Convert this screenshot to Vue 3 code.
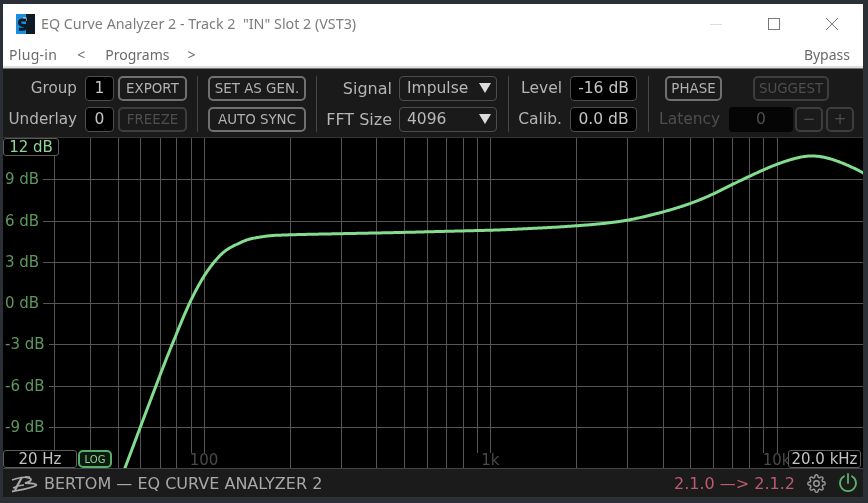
<script setup>
const titleText = 'EQ Curve Analyzer 2 - Track 2  "IN" Slot 2 (VST3)'

const freqs = [30, 40, 50, 60, 70, 80, 90, 100, 200, 300, 400, 500, 600, 700, 800, 900, 1000, 2000, 3000, 4000, 5000, 6000, 7000, 8000, 9000, 10000]
const xOf = (f) => 204 + 286.3 * Math.log10(f / 100)
const vLines = freqs.map((f) => Math.round(xOf(f)) + 0.5)

const dbs = [9, 6, 3, 0, -3, -6, -9]
const yOf = (db) => 303 - db * 13.75
const hLines = dbs.map((d) => Math.round(yOf(d)) + 0.5)
const dbLabels = dbs.map((d) => ({ text: d + " dB", top: yOf(d) - 138 }))
const freqLabels = [
  { text: "100", left: xOf(100) - 3 },
  { text: "1k", left: xOf(1000) - 3 },
  { text: "10k", left: xOf(10000) - 3 },
]

const pts = [
  [100, 532], [125, 468], [143, 420], [165, 362], [187, 308], [200, 282], [212, 264], [225, 250], [248, 239],
  [270, 235.5], [300, 234.5], [400, 232.5], [500, 230], [560, 227], [600, 224],
  [628, 220.5], [660, 213], [690, 204], [714, 194], [733, 184], [750, 176],
  [775, 164.5], [800, 156.5], [812, 154.5], [830, 158], [848, 165], [866, 174], [900, 195],
]
// sample the points every pixel and smooth them, wider on the flat right side
const xs = []
let ys = []
for (let x = 100; x <= 900; x++) {
  let i = 0
  while (pts[i + 1][0] < x) i++
  const t = (x - pts[i][0]) / (pts[i + 1][0] - pts[i][0])
  xs.push(x)
  ys.push(pts[i][1] + t * (pts[i + 1][1] - pts[i][1]))
}
for (let pass = 0; pass < 3; pass++) {
  ys = ys.map((_, i) => {
    const hw = xs[i] > 420 ? 9 : 4
    const part = ys.slice(Math.max(0, i - hw), i + hw + 1)
    return part.reduce((a, b) => a + b, 0) / part.length
  })
}
const curve = "M" + xs.map((x, i) => `${x} ${ys[i].toFixed(2)}`).join("L")
</script>

<template>
  <div class="app">
    <div class="window">
      <div class="titlebar">
        <svg class="s-logo" width="19" height="20" viewBox="0 0 19 20">
          <rect width="19" height="20" fill="#1b8fdc" />
          <rect x="10" width="9" height="20" fill="#0b1a26" />
          <path d="M7 3.500H10.500V7H8Z" fill="#f2f6f8" />
          <path d="M10 6H6.500Q3.500 6 3.500 8.500T7 11.500H9Q11 12 9.500 14T3 15" fill="none" stroke="#0b1a26" stroke-width="3" />
        </svg>
        <span class="title">{{ titleText }}</span>
        <div class="win-btns">
          <svg width="14" height="14" viewBox="0 0 14 14"><path d="M1 7.500H13" stroke="#ddd" /></svg>
          <svg width="14" height="14" viewBox="0 0 14 14"><rect x="1.500" y="1.500" width="11" height="11" fill="none" stroke="#777" /></svg>
          <svg width="14" height="14" viewBox="0 0 14 14"><path d="M1 1L13 13M13 1L1 13" stroke="#777" fill="none" /></svg>
        </div>
      </div>
      <div class="menubar">
        <span class="m-plugin">Plug-in</span>
        <span class="m-arrow">&lt;</span>
        <span class="m-programs">Programs</span>
        <span class="m-arrow last">&gt;</span>
        <span class="m-bypass">Bypass</span>
      </div>
    </div>

    <div class="toolbar">
      <div class="group g1">
        <span class="lbl">Group</span>
        <span class="box">1</span>
        <button class="btn">EXPORT</button>
        <span class="lbl">Underlay</span>
        <span class="box">0</span>
        <button class="btn off">FREEZE</button>
      </div>
      <div class="sep"></div>
      <div class="group g2">
        <button class="btn">SET AS GEN.</button>
        <button class="btn">AUTO SYNC</button>
      </div>
      <div class="sep"></div>
      <div class="group g3">
        <span class="lbl">Signal</span>
        <div class="select">Impulse<i class="tri"></i></div>
        <span class="lbl">FFT Size</span>
        <div class="select">4096<i class="tri"></i></div>
      </div>
      <div class="sep wide"></div>
      <div class="group g4">
        <span class="lbl">Level</span>
        <span class="box">-16 dB</span>
        <span class="lbl">Calib.</span>
        <span class="box">0.0 dB</span>
      </div>
      <div class="sep wide"></div>
      <div class="g5">
        <div class="row top">
          <button class="btn phase">PHASE</button>
          <button class="btn off suggest">SUGGEST</button>
        </div>
        <div class="row">
          <span class="lat-lbl">Latency</span>
          <span class="lat-box">0</span>
          <button class="btn off step minus">−</button>
          <button class="btn off step">+</button>
        </div>
      </div>
    </div>

    <div class="graph">
      <svg class="plot" width="860" height="330" viewBox="3 138 860 330">
        <path v-for="x in vLines" :key="x" :d="`M${x} 138V468`" stroke="#555" />
        <path v-for="y in hLines" :key="y" :d="`M3 ${y}H863`" stroke="#555" />
        <path :d="curve" fill="none" stroke="#84dc8e" stroke-width="3" />
      </svg>
      <span v-for="l in dbLabels" :key="l.text" class="db" :style="{ top: l.top + 'px' }">{{ l.text }}</span>
      <span v-for="l in freqLabels" :key="l.text" class="freq" :style="{ left: l.left + 'px' }">{{ l.text }}</span>
      <span class="badge top-db">12 dB</span>
      <span class="badge low">20 Hz</span>
      <span class="log">LOG</span>
      <span class="badge high">20.0 kHz</span>
    </div>

    <div class="footer">
      <svg class="b-logo" width="34" height="26" viewBox="0 2 34 26">
        <path d="M7 12C12 10 19 9 25 9" fill="none" stroke="#a8a8a8" stroke-width="1.600" />
        <path d="M17 9L10 22" fill="none" stroke="#a8a8a8" stroke-width="2.200" />
        <path d="M20 9C26 10 30 12 20 15C26 15 33 16 31 17.500C26 20.500 15 22 7 23.500" fill="none" stroke="#a8a8a8" stroke-width="1.800" />
        <path d="M8 20C12 18 15 17 19 17" fill="none" stroke="#a8a8a8" stroke-width="1.400" />
      </svg>
      <span class="brand">BERTOM — EQ CURVE ANALYZER 2</span>
      <span class="version">2.1.0 —&gt; 2.1.2</span>
      <svg class="gear" width="19" height="19" viewBox="0 0 24 24" fill="none" stroke="#9a9a9a" stroke-width="1.800" stroke-linejoin="round">
        <circle cx="12" cy="12" r="3.500" />
        <path d="M19.400 15a1.650 1.650 0 0 0 .33 1.820l.06.06a2 2 0 1 1-2.830 2.830l-.06-.06a1.650 1.650 0 0 0-2.800 1.170V21a2 2 0 1 1-4 0v-.09a1.650 1.650 0 0 0-2.800-1.170l-.06.06a2 2 0 1 1-2.830-2.830l.06-.06a1.650 1.650 0 0 0-1.170-2.800H3a2 2 0 1 1 0-4h.09a1.650 1.650 0 0 0 1.170-2.800l-.06-.06a2 2 0 1 1 2.830-2.830l.06.06a1.650 1.650 0 0 0 2.800-1.170V3a2 2 0 1 1 4 0v.09a1.650 1.650 0 0 0 2.800 1.170l.06-.06a2 2 0 1 1 2.830 2.830l-.06.06a1.650 1.650 0 0 0 1.170 2.800H21a2 2 0 1 1 0 4h-.09a1.650 1.650 0 0 0-1.510 1z" />
      </svg>
      <svg class="power" width="20" height="20" viewBox="0 0 20 20" fill="none" stroke="#58b268" stroke-width="1.800" stroke-linecap="round">
        <path d="M6 3.200A8 8 0 1 0 14 3.200" />
        <path d="M10 1V10" />
      </svg>
    </div>
  </div>
</template>

<style>
html,
body {
  margin: 0;
  background: #2b3037;
}
</style>

<style scoped>
.app {
  width: 868px;
  height: 503px;
  box-sizing: border-box;
  padding: 4px 5px 0 3px;
  background: #2b3037;
  overflow: hidden;
  font-family: "DejaVu Sans", sans-serif;
  filter: blur(0.3px);
}

/* host window */
.window {
  height: 64px;
  background: #fff;
  border-bottom: 1px solid #777;
  box-sizing: content-box;
  font-family: "Noto Sans", sans-serif;
  box-shadow: inset 0 -2px 1px #ddd;
}
.titlebar {
  display: flex;
  align-items: center;
  height: 39px;
  padding-left: 13px;
}
.s-logo {
  margin-right: 6px;
}
.title {
  font-size: 14.300px;
  color: #7d7d7d;
  white-space: pre;
}
.win-btns {
  margin-left: auto;
  display: flex;
  gap: 44px;
  margin-right: 24px;
}
.menubar {
  display: flex;
  align-items: center;
  height: 22px;
  padding-left: 6px;
  padding-right: 13px;
  font-size: 14px;
  color: #6b6b6b;
}
.m-plugin {
  letter-spacing: 0.3px;
}
.m-arrow {
  margin-left: 20px;
}
.m-arrow.last {
  margin-left: 18px;
}
.m-programs {
  margin-left: 20px;
}
.m-bypass {
  margin-left: auto;
}

/* controls */
.toolbar {
  display: flex;
  align-items: center;
  height: 68px;
  background: #1a1a1a;
  border-bottom: 1px solid #333;
  box-sizing: content-box;
}
.group {
  display: grid;
  grid-template-rows: 25px 25px;
  row-gap: 6px;
  align-items: stretch;
  margin-top: 1px;
}
.g1 {
  grid-template-columns: 78px 29px 69px;
  column-gap: 4px;
}
.g1 .lbl {
  padding-right: 4px;
  font-size: 15.200px;
}
.g2 {
  grid-template-columns: 98px;
}
.g3 {
  grid-template-columns: 65px 98px;
  column-gap: 7px;
}
.g3 .lbl {
  font-size: 16px;
}
.g4 {
  grid-template-columns: 43px 67px;
  column-gap: 8px;
}
.sep {
  width: 1px;
  height: 56px;
  background: #474747;
  margin: 1px 10px 0;
}
.sep.wide {
  margin-left: 11px;
}
.lbl {
  display: flex;
  align-items: center;
  justify-content: flex-end;
  font-size: 15.500px;
  color: #b4b4b4;
  white-space: nowrap;
}
.box {
  display: flex;
  align-items: center;
  justify-content: center;
  background: #000;
  border: 1px solid #4d4d4d;
  border-radius: 4px;
  box-sizing: border-box;
  font-size: 15.500px;
  color: #c4c4c4;
}
.btn {
  display: flex;
  align-items: center;
  justify-content: center;
  padding: 0;
  background: #1a1a1a;
  border: 2px solid #707070;
  border-radius: 5px;
  box-sizing: border-box;
  font-family: "DejaVu Sans", sans-serif;
  font-size: 13.400px;
  color: #b0b0b0;
}
.btn.off {
  border-color: #3d3d3d;
  color: #4e4e4e;
}
.select {
  display: flex;
  align-items: center;
  justify-content: space-between;
  padding: 0 5px 0 7px;
  border: 1px solid #4d4d4d;
  border-radius: 4px;
  box-sizing: border-box;
  background: #1a1a1a;
  font-size: 15.500px;
  color: #b8b8b8;
}
.tri {
  width: 0;
  height: 0;
  border-left: 6.500px solid transparent;
  border-right: 6.500px solid transparent;
  border-top: 10px solid #dcdcdc;
}
.g5 {
  display: flex;
  flex-direction: column;
  gap: 6px;
  margin-top: 1px;
}
.row {
  display: flex;
  height: 25px;
}
.top {
  padding-left: 6px;
}
.phase {
  width: 57px;
}
.suggest {
  width: 76px;
  margin-left: 31px;
}
.lat-lbl {
  display: flex;
  align-items: center;
  width: 70px;
  font-size: 15.500px;
  color: #4e4e4e;
}
.lat-box {
  display: flex;
  align-items: center;
  justify-content: center;
  width: 64px;
  background: #050505;
  border-radius: 4px;
  font-size: 15.500px;
  color: #4e4e4e;
}
.step {
  width: 28px;
  margin-left: 2px;
  font-size: 15px;
}
.minus + .step {
  margin-left: 3px;
}

/* graph */
.graph {
  position: relative;
  width: 860px;
  height: 330px;
  background: #000;
  overflow: hidden;
}
.plot {
  display: block;
}
.db {
  position: absolute;
  left: 0;
  transform: translateY(-50%);
  padding: 0 4px 0 2px;
  background: #000;
  font-size: 15px;
  line-height: 18px;
  color: #5e985e;
}
.freq {
  position: absolute;
  bottom: 0;
  width: 30px;
  margin-left: -15px;
  background: #000;
  text-align: center;
  font-size: 15px;
  line-height: 15px;
  color: #4a4a4a;
}
.badge {
  position: absolute;
  display: flex;
  align-items: center;
  justify-content: center;
  height: 18px;
  box-sizing: border-box;
  background: #000;
  border: 1px solid #5c5c5c;
  border-radius: 3px;
  font-size: 15px;
  color: #c4c4c4;
}
.top-db {
  left: 0;
  top: 0;
  width: 56px;
  color: #8fd596;
}
.low {
  left: 0;
  bottom: 0;
  width: 74px;
}
.high {
  right: 2px;
  bottom: 0;
  width: 73px;
}
.log {
  position: absolute;
  left: 75px;
  bottom: 0;
  display: flex;
  align-items: center;
  justify-content: center;
  width: 34px;
  height: 18px;
  box-sizing: border-box;
  background: #0c1a10;
  border: 2px solid #57b06a;
  border-radius: 5px;
  font-size: 10px;
  color: #8fd596;
}

/* status bar */
.footer {
  display: flex;
  align-items: center;
  height: 30px;
  background: #1b1b1b;
  border-top: 1px solid #444;
  border-bottom: 1px solid #333;
  box-sizing: border-box;
}
.b-logo {
  margin-left: 2px;
}
.brand {
  margin-left: 5px;
  font-size: 16px;
  color: #a8a8a8;
}
.version {
  margin-left: auto;
  font-size: 16px;
  color: #bd5a6e;
}
.gear {
  margin-left: 12px;
}
.power {
  margin-left: 12px;
  margin-right: 5px;
}
</style>
